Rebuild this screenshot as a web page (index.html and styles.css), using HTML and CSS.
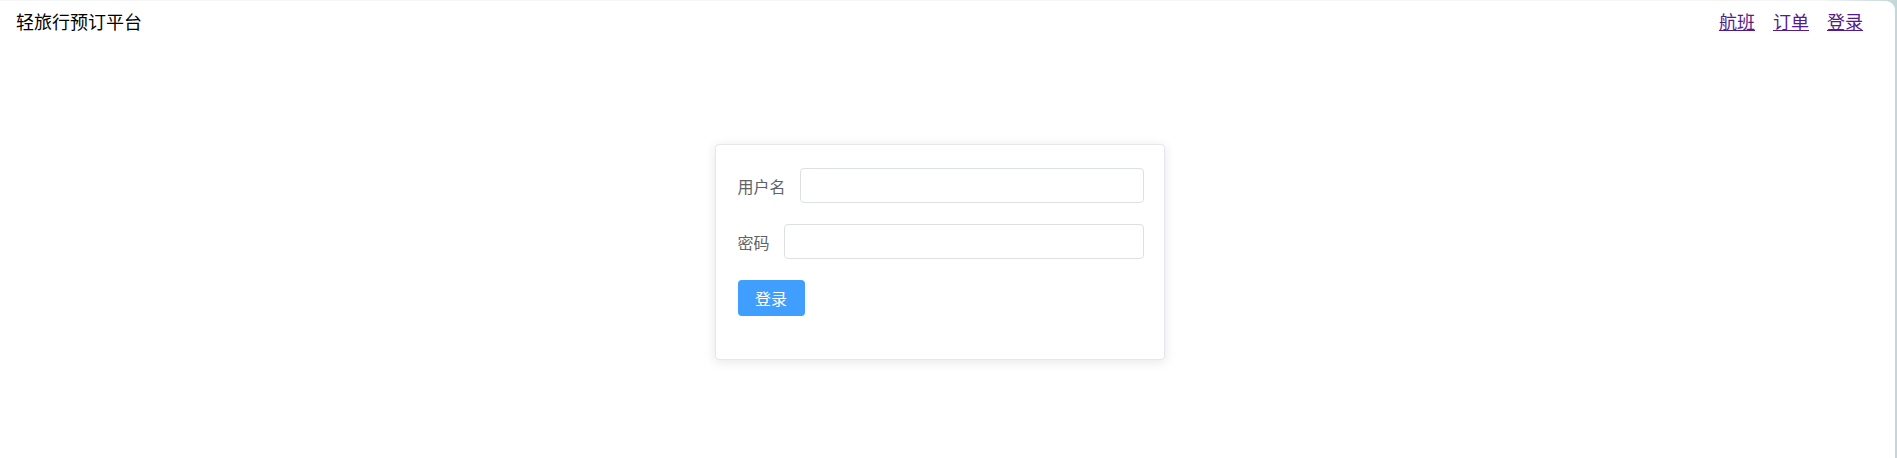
FILE: index.html
```html
<!DOCTYPE html>
<html lang="zh-CN">
<head>
  <meta charset="UTF-8" />
  <meta name="viewport" content="width=device-width, initial-scale=1.0"/>
  <title>轻旅行预订平台 - 登录</title>
  <link rel="stylesheet" href="styles.css">
</head>
<body>
  <div class="app">
    <header class="topbar">
      <div class="brand">轻旅行预订平台</div>
      <nav class="nav">
        <a href="#flights">航班</a>
        <a href="#orders">订单</a>
        <a href="#login">登录</a>
      </nav>
    </header>

    <main class="main">
      <form class="card" onsubmit="return false">
        <div class="row">
          <label for="username">用户名</label>
          <input type="text" id="username" />
        </div>
        <div class="row">
          <label for="password">密码</label>
          <input type="password" id="password" />
        </div>
        <div class="row actions">
          <button type="submit">登录</button>
        </div>
      </form>
    </main>
  </div>
</body>
</html>
```

FILE: styles.css
```css
html, body { height: 100%; }
body {
  margin: 0; padding: 1px 2px 0 0; box-sizing: border-box;
  font-family: "Noto Sans CJK SC", "Liberation Sans", sans-serif;
  background: linear-gradient(90deg, #f3f6f5 96%, #c3d6d9);
  overflow: hidden;
}
.app {
  height: 100%; background: #fff;
  border-top-right-radius: 9px;
}
.topbar {
  display: flex; justify-content: space-between; align-items: center;
  padding: 8px 32px 0 16px; font-size: 18px; line-height: 24px;
}
.brand { color: #000; }
.nav { display: flex; gap: 18px; }
.nav a { color: #551a8b; text-decoration: underline; }

.main {
  display: flex; justify-content: center;
  padding: 111px 16px 0 0;
}
.card {
  width: 450px; box-sizing: border-box;
  padding: 23px 20px 21px 22px;
  border: 1px solid #e4e7ed; border-radius: 4px;
  background: #fff; box-shadow: 0 2px 12px rgba(0, 0, 0, .1);
}
.row {
  display: flex; align-items: center; margin-bottom: 21px;
}
.row label {
  font-size: 16px; color: #606266; margin-right: 14px;
  white-space: nowrap;
}
.row input {
  flex: 1; height: 35px; box-sizing: border-box; padding: 0 12px;
  border: 1px solid #dcdfe6; border-radius: 4px; outline: none;
  font-size: 14px; color: #606266;
}
.actions { margin-bottom: 22px; }
button {
  width: 67px; height: 36px; margin-left: 0;
  background: #409eff; color: #fff; border: none; border-radius: 4px;
  font-family: inherit; font-size: 16px; cursor: pointer;
}
button:hover { background: #66b1ff; }
```
